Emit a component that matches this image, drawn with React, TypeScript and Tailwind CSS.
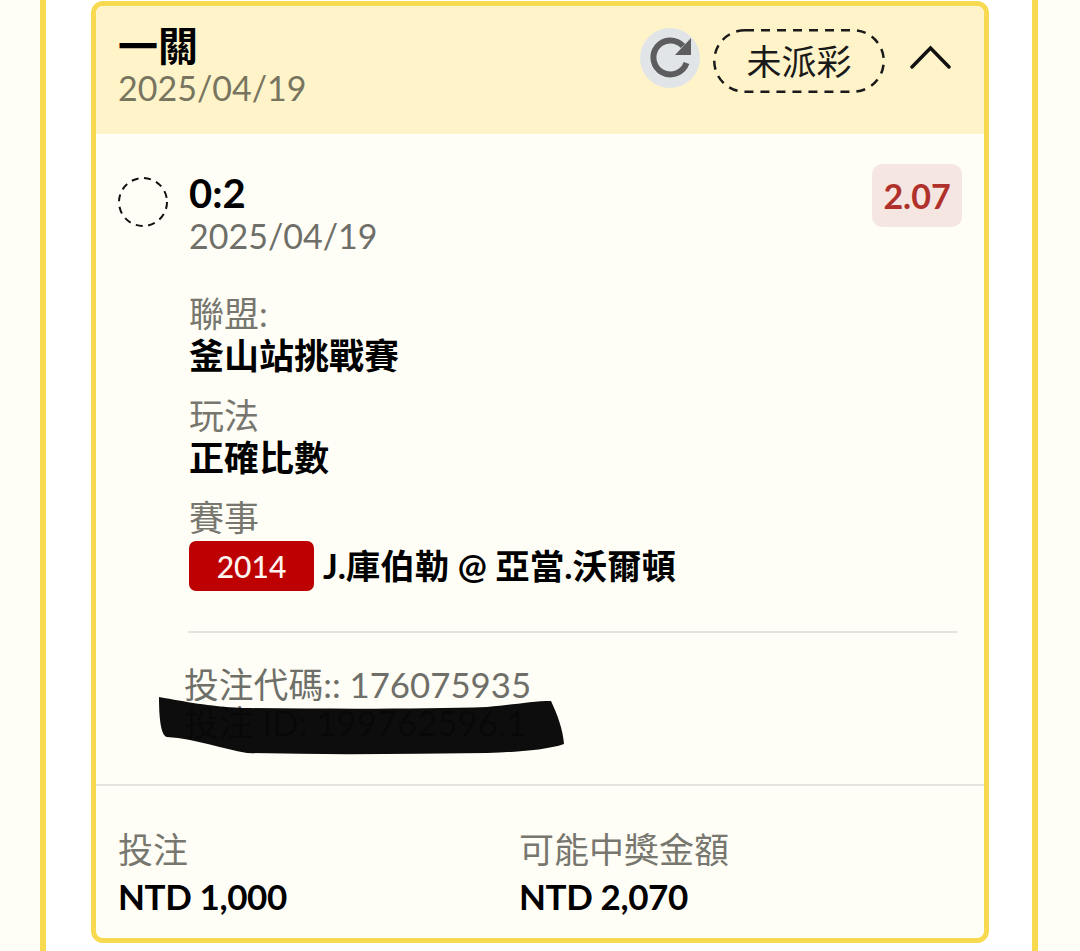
import React from "react";

const font = { fontFamily: '"Lato","Noto Sans CJK TC",sans-serif' };

function Field({ label, value }: { label: string; value: string }) {
  return (
    <div className="flex flex-col">
      <div className="text-[35px] leading-[42px] text-[#77776f]">{label}</div>
      <div className="text-[35px] leading-[42px] font-bold text-black">{value}</div>
    </div>
  );
}

export default function App() {
  return (
    <div style={font} className="w-[1080px] h-[951px] overflow-hidden bg-[#fffef6] font-['Lato','Noto_Sans_CJK_TC',sans-serif]">
      <div className="ml-[40px] w-[998px] h-[951px] border-x-[6px] border-[#f8da50] bg-white pl-[45px] pr-[43px] pt-[1px]">
        <div className="w-[898px] h-[942px] rounded-[12px] border-[5px] border-[#f8da50] bg-[#fffef6] overflow-hidden flex flex-col">
          {/* header */}
          <div className="h-[128px] shrink-0 bg-[#fff4c9] pl-[22px] pr-[32px] flex items-start justify-between">
            <div className="pt-[18px]">
              <div className="text-[40px] leading-[44px] font-bold text-black">一關</div>
              <div className="mt-[1px] text-[34px] leading-[38px] text-[#77755f]">2025/04/19</div>
            </div>
            <div className="flex items-start pt-[22px]">
              <div className="w-[60px] h-[60px] rounded-full bg-[#e2e5e8] flex items-center justify-center">
                <svg width="46" height="46" viewBox="0 0 46 46" fill="none">
                  <path d="M36 11A17 17 0 1 0 39.5 28" stroke="#5d5d60" strokeWidth="6" />
                  <path d="M44 3v17H28z" fill="#5d5d60" />
                </svg>
              </div>
              <div className="relative ml-[13px] mt-[1px] w-[172px] h-[64px] flex items-center justify-center text-[35px] leading-none text-[#1a1a1a]">
                <svg className="absolute inset-0" width="172" height="64" viewBox="0 0 172 64" fill="none">
                  <rect x="1.25" y="1.25" width="169.5" height="61.5" rx="30.75" stroke="#1a1a1a" strokeWidth="2.5" strokeDasharray="9 7" />
                </svg>
                未派彩
              </div>
              <svg className="ml-[25px] mt-[17px]" width="42" height="25" viewBox="0 0 42 25" fill="none">
                <path d="M2 22 20.5 3 39 22" stroke="#111" strokeWidth="3.5" strokeLinecap="round" />
              </svg>
            </div>
          </div>
          {/* body */}
          <div className="flex-1 pl-[22px] pr-[22px] pt-[30px] flex items-start">
            <svg className="mt-[13px] shrink-0" width="50" height="50" viewBox="0 0 50 50" fill="none">
              <circle cx="25" cy="25" r="24" stroke="#111" strokeWidth="2" strokeDasharray="7 5.6" />
            </svg>
            <div className="ml-[20px] flex-1 min-w-0">
              <div className="pl-[1px] flex items-start justify-between">
                <div className="pt-[7px]">
                  <div className="text-[40px] leading-[44px] font-bold text-black">0:2</div>
                  <div className="mt-[2px] text-[34px] leading-[38px] text-[#6f6f69]">2025/04/19</div>
                </div>
                <div className="w-[90px] h-[63px] rounded-[10px] bg-[#f5e6e1] flex items-center justify-center text-[34px] font-bold text-[#b0302b]">
                  2.07
                </div>
              </div>
              <div className="pl-[1px] mt-[37px] flex flex-col gap-[18px] w-[769px]">
                <Field label="聯盟:" value="釜山站挑戰賽" />
                <Field label="玩法" value="正確比數" />
                <div className="flex flex-col">
                  <div className="text-[35px] leading-[42px] text-[#77776f]">賽事</div>
                  <div className="mt-[3px] flex items-center">
                    <div className="w-[125px] h-[50px] rounded-[7px] bg-[#bd0000] flex items-center justify-center text-[30px] font-medium text-[#fff5f0]">
                      2014
                    </div>
                    <div className="ml-[9px] text-[34.5px] leading-[50px] font-bold text-black">J.庫伯勒 @ 亞當.沃爾頓</div>
                  </div>
                </div>
              </div>
              <div className="mt-[40px] w-[769px] h-[2px] bg-[#e5e5df]" />
              <div className="relative mt-[33px] -ml-[4px] text-[34.8px] leading-[38px] text-[#6f6f69]">
                <div>投注代碼:: 176075935</div>
                <div>投注 ID: 199762596.1</div>
                <svg className="absolute left-[-27px] top-[28px] blur-[0.6px]" width="410" height="62" viewBox="0 0 410 62">
                  <path
                    d="M2 3C30 8 50 12 85 14c95 1 185 1 245-1 25-2 45-6 64-6 6 13 12 28 13 43-17 6-47 8-77 9-80 1-160 2-240 0-25-4-50-14-80-16C5 42 2 30 2 3Z"
                    fill="#050505"
                    fillOpacity="0.97"
                  />
                </svg>
              </div>
            </div>
          </div>
          {/* footer */}
          <div className="h-[154px] shrink-0 border-t-2 border-[#e5e5df] pl-[22px] pt-[42px] flex">
            <div className="w-[401px]">
              <div className="text-[35px] leading-[42px] text-[#77776f]">投注</div>
              <div className="mt-[5px] text-[35px] leading-[42px] font-bold tracking-[-0.4px] text-black">NTD 1,000</div>
            </div>
            <div>
              <div className="text-[35px] leading-[42px] text-[#77776f]">可能中獎金額</div>
              <div className="mt-[5px] text-[35px] leading-[42px] font-bold tracking-[-0.4px] text-black">NTD 2,070</div>
            </div>
          </div>
        </div>
      </div>
    </div>
  );
}
